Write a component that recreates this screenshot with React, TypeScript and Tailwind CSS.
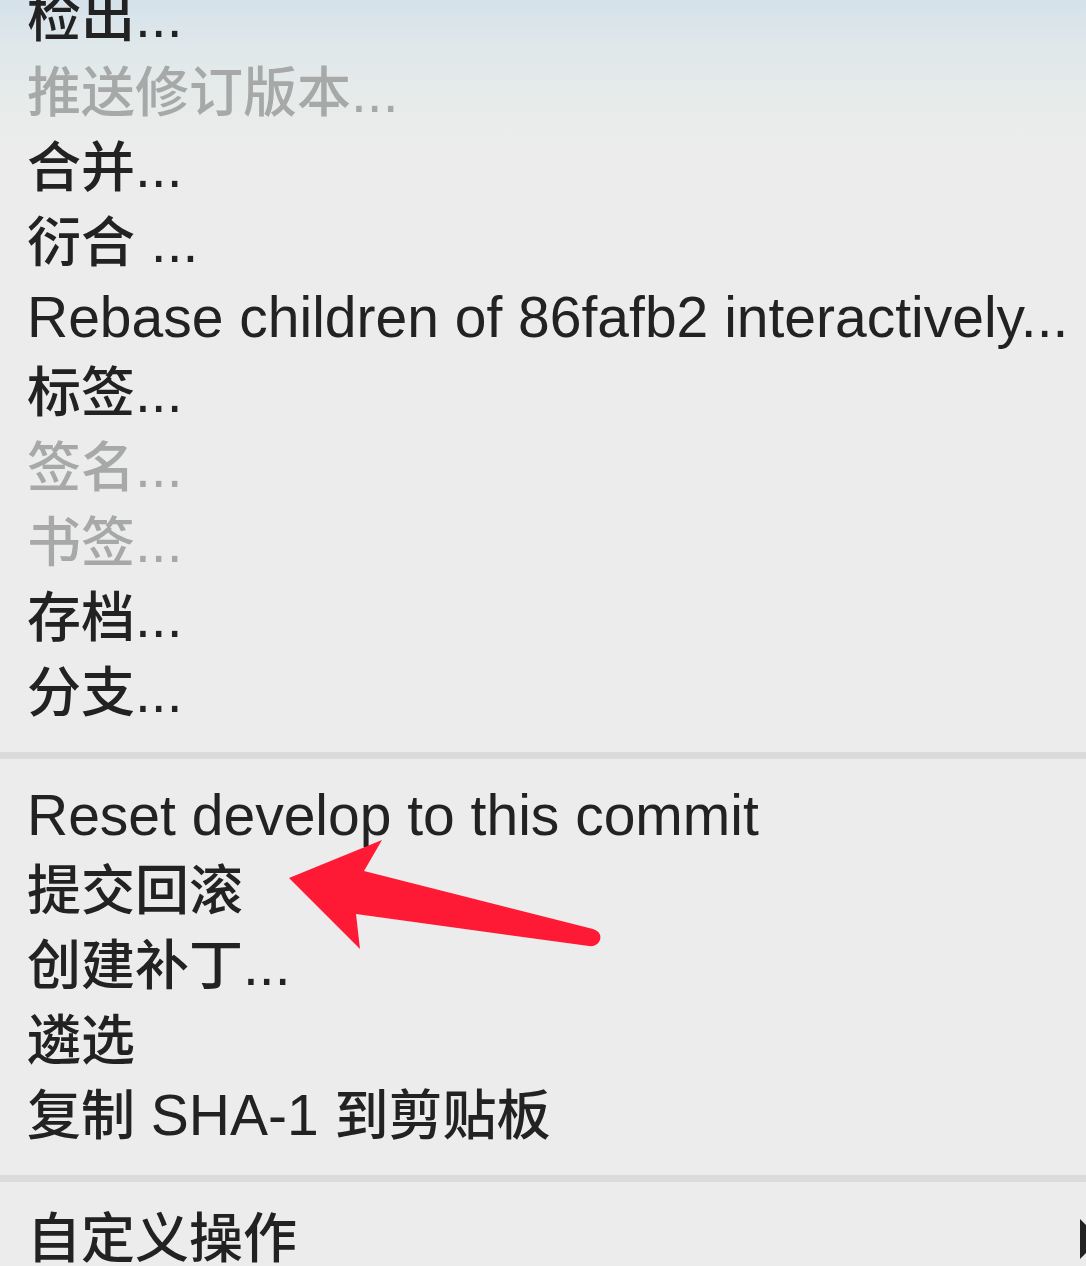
import React from "react";

type Item = { label: string; disabled?: boolean };

const group1: Item[] = [
  { label: "检出..." },
  { label: "推送修订版本...", disabled: true },
  { label: "合并..." },
  { label: "衍合 ..." },
  { label: "Rebase children of 86fafb2 interactively..." },
  { label: "标签..." },
  { label: "签名...", disabled: true },
  { label: "书签...", disabled: true },
  { label: "存档..." },
  { label: "分支..." },
];

const group2: Item[] = [
  { label: "Reset develop to this commit" },
  { label: "提交回滚" },
  { label: "创建补丁..." },
  { label: "遴选" },
  { label: "复制 SHA-1 到剪贴板" },
];

function Label({ text }: { text: string }) {
  const parts = text.split(/([\u4e00-\u9fff]+)/).filter((p) => p.length > 0);
  return (
    <>
      {parts.map((p, i) =>
        /[\u4e00-\u9fff]/.test(p) ? (
          <span key={i} className="text-[54px] font-medium">
            {p}
          </span>
        ) : (
          <span key={i}>{p}</span>
        )
      )}
    </>
  );
}

function Row({ item }: { item: Item }) {
  return (
    <div
      className={`flex h-[75px] shrink-0 items-center whitespace-nowrap pl-[27px] text-[57px] leading-none ${
        item.disabled ? "text-[#a7a9a9]" : "text-[#222222]"
      }`}
    >
      <span className="whitespace-pre">
        <Label text={item.label} />
      </span>
    </div>
  );
}

function Separator() {
  return <div className="mt-[22px] mb-[19px] h-[7px] w-full shrink-0 bg-[#dbdbdb]" />;
}

export default function App() {
  return (
    <div
      className="relative h-[1266px] w-[1086px] overflow-hidden bg-[linear-gradient(to_bottom,#d5e2eb_0px,#e0e8ea_50px,#e7ebea_100px,#ececec_150px)]"
      style={{ fontFamily: '"Liberation Sans", "Noto Sans CJK SC", sans-serif' }}
    >
      <div className="mt-[-20px] flex flex-col">
        {group1.map((it, i) => (
          <Row key={i} item={it} />
        ))}
        <Separator />
        {group2.map((it, i) => (
          <Row key={i} item={it} />
        ))}
        <Separator />
        <div className="flex h-[75px] shrink-0 items-center justify-between whitespace-nowrap pl-[27px] text-[57px] leading-none text-[#222222]">
          <span className="text-[54px] font-medium">自定义操作</span>
          <svg width="14" height="40" viewBox="0 0 14 40" className="mr-[-8px]">
            <path d="M0 0 L20 20 L0 40 Z" fill="#222" />
          </svg>
        </div>
      </div>
      <svg
        className="pointer-events-none absolute left-0 top-0"
        width="1086"
        height="1266"
        viewBox="0 0 1086 1266"
      >
        <path
          d="M289 878 L382 840 L364 871 L593 929 Q602 932 600 940 Q597 947 589 946 L356 914 L360 949 Z"
          fill="#fe1a35"
        />
      </svg>
    </div>
  );
}
